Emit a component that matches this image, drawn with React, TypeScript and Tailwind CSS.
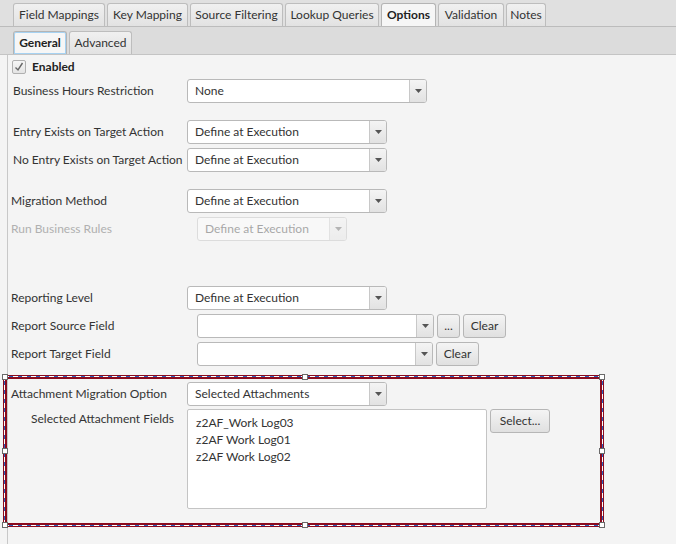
import React from "react";

const font = { fontFamily: "Lato, 'Open Sans', sans-serif" };

function Tab({ label, w, selected, focus }: { label: string; w: string; selected?: boolean; focus?: boolean }) {
  return (
    <div
      className={
        "h-[23px] flex items-center justify-center rounded-t-[3px] border border-b-0 text-[12px] whitespace-nowrap " +
        w +
        " " +
        (selected
          ? "bg-[#f6f6f6] font-bold text-[#222] border-[#b4b4b4]"
          : "bg-gradient-to-b from-[#f0f0f0] to-[#e2e2e2] text-[#333] border-[#bdbdbd]") +
        (focus ? " shadow-[inset_0_0_0_1px_#a6d2f2]" : "")
      }
    >
      {label}
    </div>
  );
}

function Arrow() {
  return (
    <svg width="7" height="4" viewBox="0 0 7 4">
      <path d="M0 0 H7 L3.5 4 Z" fill="#555" />
    </svg>
  );
}

function Combo({ value, width, disabled }: { value: string; width: number; disabled?: boolean }) {
  return (
    <div
      className={
        "h-[24px] flex rounded-[3px] border border-[#b9b9b9] bg-white overflow-hidden " +
        (disabled ? "opacity-40" : "")
      }
      style={{ width }}
    >
      <div className="flex-1 flex items-center pl-[7px] text-[12px] text-[#333]">{value}</div>
      <div className="w-[17px] border-l border-[#c8c8c8] bg-gradient-to-b from-[#f4f4f4] to-[#e2e2e2] flex items-center justify-center">
        <Arrow />
      </div>
    </div>
  );
}

function Button({ label, width }: { label: string; width: number }) {
  return (
    <div
      className="h-[24px] flex items-center justify-center rounded-[3px] border border-[#b6b6b6] bg-gradient-to-b from-[#f4f4f4] to-[#e0e0e0] text-[12px] text-[#333]"
      style={{ width }}
    >
      {label}
    </div>
  );
}

function Row({
  label,
  children,
  labelClass = "",
  mt,
}: {
  label: string;
  children: React.ReactNode;
  labelClass?: string;
  mt: string;
}) {
  return (
    <div className={"flex items-center h-[24px] " + mt}>
      <div className={"text-[12px] text-[#333] whitespace-nowrap " + labelClass}>{label}</div>
      {children}
    </div>
  );
}

function Handle({ cls }: { cls: string }) {
  return <div className={"absolute w-[6px] h-[6px] bg-white border border-[#6a6a6a] " + cls} />;
}

const dashH = "bg-[repeating-linear-gradient(90deg,#ffffff_0_5px,#2a5fc0_5px_9px)]";
const dashV = "bg-[repeating-linear-gradient(180deg,#ffffff_0_5px,#2a5fc0_5px_9px)]";

export default function App() {
  return (
    <div className="w-[676px] h-[544px] bg-[#f4f4f4] overflow-hidden flex flex-col" style={font}>
      {/* outer tab bar */}
      <div className="h-[27px] shrink-0 bg-[#e0e0e0] border-b border-[#bcbcbc] flex items-end pl-[13px] gap-[2px]">
        <Tab label="Field Mappings" w="w-[92px]" />
        <Tab label="Key Mapping" w="w-[81px]" />
        <Tab label="Source Filtering" w="w-[93px]" />
        <Tab label="Lookup Queries" w="w-[94px]" />
        <Tab label="Options" w="w-[55px]" selected />
        <Tab label="Validation" w="w-[66px]" />
        <Tab label="Notes" w="w-[40px]" />
      </div>
      {/* inner tab bar */}
      <div className="h-[28px] shrink-0 bg-[#dcdcdc] border-b border-[#c4c4c4] flex items-end pl-[13px] gap-[2px]">
        <Tab label="General" w="w-[54px]" selected focus />
        <Tab label="Advanced" w="w-[63px]" />
      </div>
      {/* content */}
      <div className="flex flex-1">
        <div className="w-[7px] shrink-0" />
        <div className="flex-1 flex flex-col border-l border-[#c8c8c8] pl-[3px]">
          <div className="flex items-center h-[14px] mt-[5px] ml-[1px]">
            <div className="w-[14px] h-[14px] rounded-[2px] border border-[#b0b0b0] bg-gradient-to-b from-[#f6f6f6] to-[#e4e4e4] flex items-center justify-center">
              <svg width="10" height="10" viewBox="0 0 10 10">
                <path d="M1.5 5.5 L4 8 L8.5 1" fill="none" stroke="#666" strokeWidth="1.4" />
              </svg>
            </div>
            <span className="ml-[6px] text-[12px] font-bold text-[#222]">Enabled</span>
          </div>
          <Row label="Business Hours Restriction" mt="mt-[5px]" labelClass="pl-[2px] w-[176px]">
            <Combo value="None" width={240} />
          </Row>
          <Row label="Entry Exists on Target Action" mt="mt-[17px]" labelClass="pl-[2px] w-[176px]">
            <Combo value="Define at Execution" width={200} />
          </Row>
          <Row label="No Entry Exists on Target Action" mt="mt-[4px]" labelClass="pl-[2px] w-[176px]">
            <Combo value="Define at Execution" width={200} />
          </Row>
          <Row label="Migration Method" mt="mt-[17px]" labelClass="w-[176px]">
            <Combo value="Define at Execution" width={200} />
          </Row>
          <Row label="Run Business Rules" mt="mt-[4px]" labelClass="w-[186px] text-[#b0b0b0]">
            <Combo value="Define at Execution" width={150} disabled />
          </Row>
          <Row label="Reporting Level" mt="mt-[45px]" labelClass="w-[176px]">
            <Combo value="Define at Execution" width={200} />
          </Row>
          <Row label="Report Source Field" mt="mt-[4px]" labelClass="w-[186px]">
            <Combo value="" width={237} />
            <div className="ml-[3px]">
              <Button label="..." width={23} />
            </div>
            <div className="ml-[3px]">
              <Button label="Clear" width={43} />
            </div>
          </Row>
          <Row label="Report Target Field" mt="mt-[4px]" labelClass="w-[186px]">
            <Combo value="" width={236} />
            <div className="ml-[3px]">
              <Button label="Clear" width={43} />
            </div>
          </Row>

          {/* selection box */}
          <div className="relative mt-[9px] -ml-[8px] w-[601px] h-[152px] border-[4px] border-[#8a0b1e] flex flex-col pl-[4px]">
            <div className={"absolute top-[-3px] left-[-3px] right-[-3px] h-px " + dashH} />
            <div className={"absolute bottom-[-3px] left-[-3px] right-[-3px] h-px " + dashH} />
            <div className={"absolute left-[-3px] top-[-3px] bottom-[-3px] w-px " + dashV} />
            <div className={"absolute right-[-3px] top-[-3px] bottom-[-3px] w-px " + dashV} />
            <Handle cls="left-[-5px] top-[-5px]" />
            <Handle cls="left-[295px] top-[-5px]" />
            <Handle cls="right-[-5px] top-[-5px]" />
            <Handle cls="left-[-5px] top-[69px]" />
            <Handle cls="right-[-5px] top-[69px]" />
            <Handle cls="left-[-5px] bottom-[-5px]" />
            <Handle cls="left-[295px] bottom-[-5px]" />
            <Handle cls="right-[-5px] bottom-[-5px]" />

            <div className="flex items-center h-[24px] mt-[3px]">
              <div className="w-[176px] text-[12px] text-[#333] whitespace-nowrap">Attachment Migration Option</div>
              <Combo value="Selected Attachments" width={200} />
            </div>
            <div className="flex mt-[3px]">
              <div className="w-[176px] pl-[20px] pt-[1px] text-[12px] text-[#333] whitespace-nowrap">
                Selected Attachment Fields
              </div>
              <div className="w-[300px] h-[100px] bg-white border border-[#c4c4c4] rounded-[2px] pl-[8px] pt-[4px] text-[12px] text-[#333] leading-[17px]">
                <div>z2AF_Work Log03</div>
                <div>z2AF Work Log01</div>
                <div>z2AF Work Log02</div>
              </div>
              <div className="ml-[3px]">
                <Button label="Select..." width={60} />
              </div>
            </div>
          </div>
        </div>
      </div>
    </div>
  );
}
